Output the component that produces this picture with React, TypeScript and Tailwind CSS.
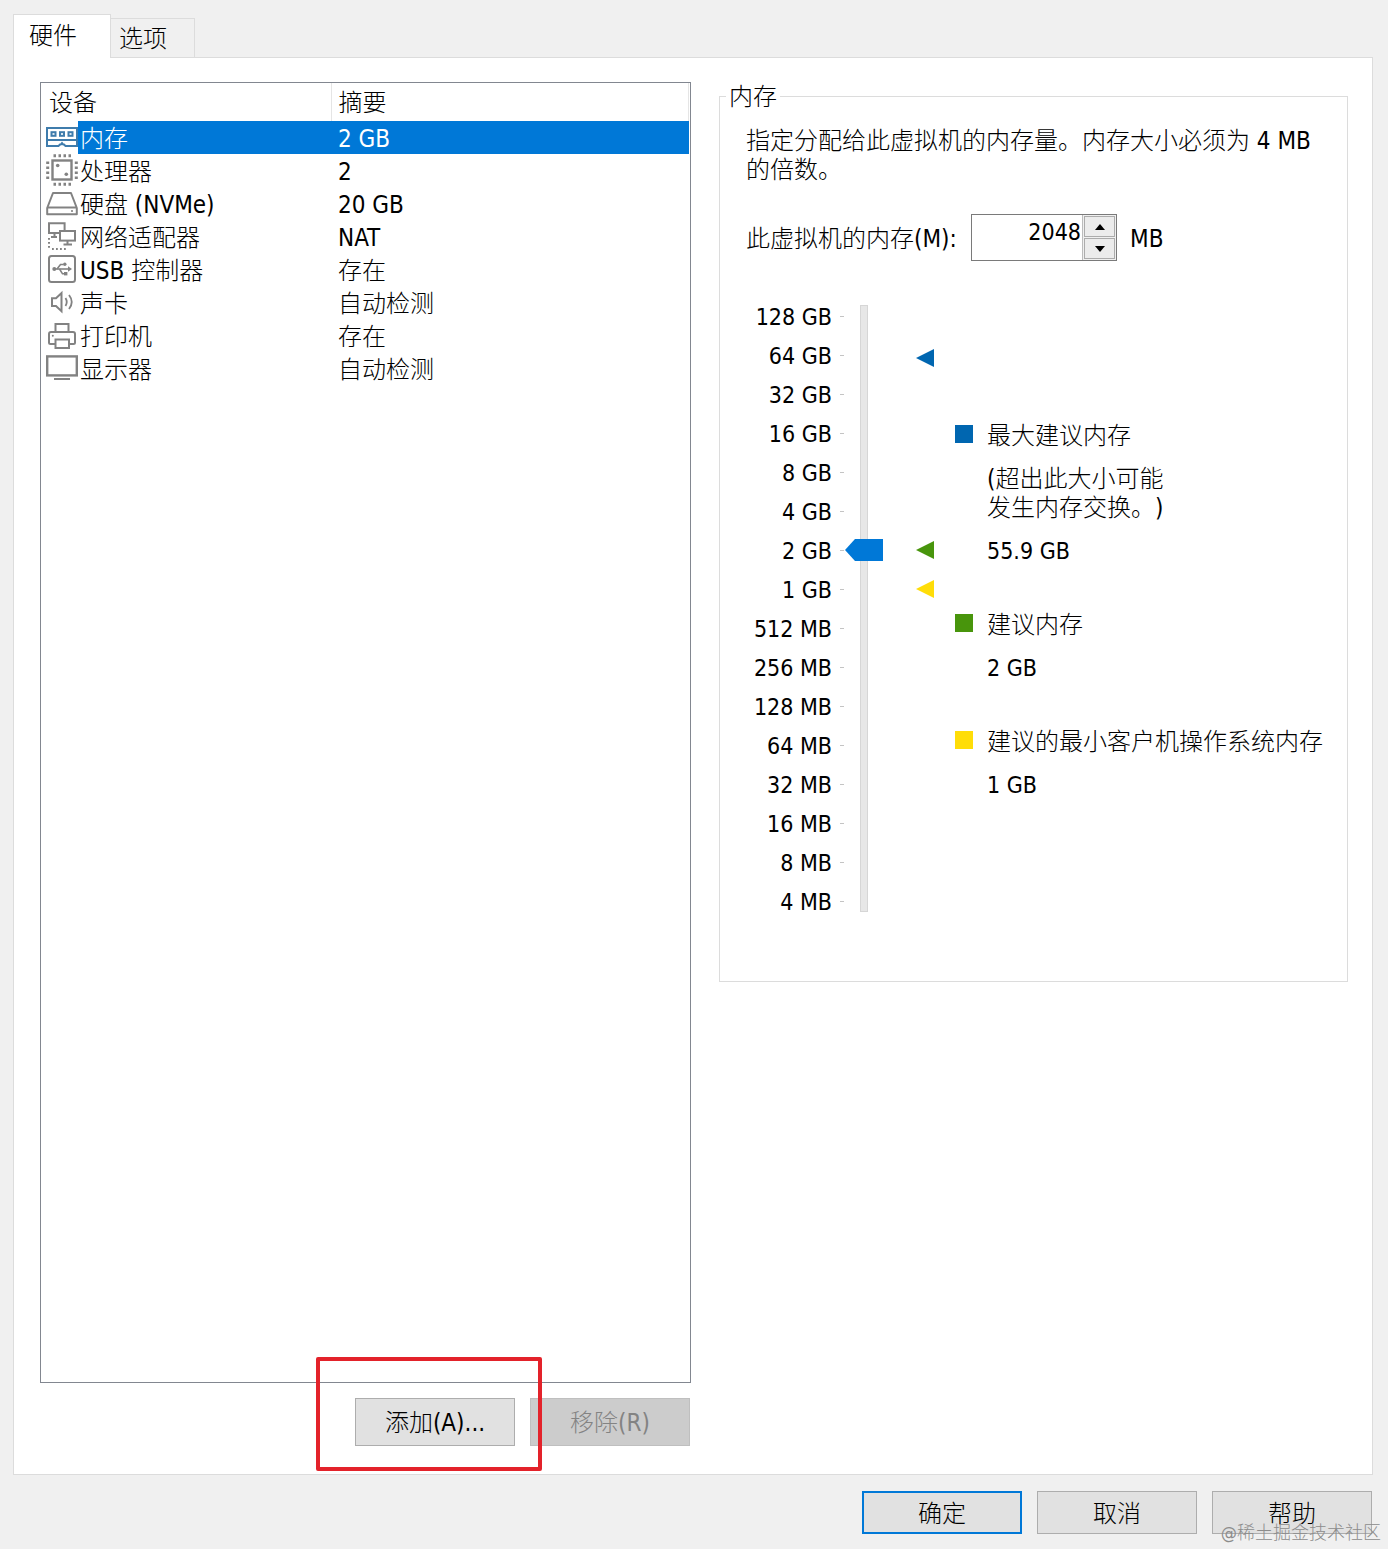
import { useState } from 'react';
import type { ReactNode } from 'react';

type Device = { name: string; summary: string; icon: ReactNode };

const devices: Device[] = [
  { name: '内存', summary: '2 GB', icon: <MemoryIcon /> },
  { name: '处理器', summary: '2', icon: <CpuIcon /> },
  { name: '硬盘 (NVMe)', summary: '20 GB', icon: <DiskIcon /> },
  { name: '网络适配器', summary: 'NAT', icon: <NetworkIcon /> },
  { name: 'USB 控制器', summary: '存在', icon: <UsbIcon /> },
  { name: '声卡', summary: '自动检测', icon: <SoundIcon /> },
  { name: '打印机', summary: '存在', icon: <PrinterIcon /> },
  { name: '显示器', summary: '自动检测', icon: <DisplayIcon /> },
];

const scale = [
  '128 GB', '64 GB', '32 GB', '16 GB', '8 GB', '4 GB', '2 GB', '1 GB',
  '512 MB', '256 MB', '128 MB', '64 MB', '32 MB', '16 MB', '8 MB', '4 MB',
];

const iconClass = 'block h-[33px] w-8 shrink-0';

function MemoryIcon() {
  return (
    <svg viewBox="0 0 32 33" className={iconClass} fill="none" stroke="#3f7cac" strokeWidth="2">
      <path d="M1 7H31V25H19.5L18 23.5H17.2L16 22L14.8 23.5H14L12.5 25H1Z" fill="#fff" />
      <path d="M1 19H31" />
      <rect x="5.5" y="11.2" width="4" height="3.6" />
      <rect x="14" y="11.2" width="4" height="3.6" />
      <rect x="22.5" y="11.2" width="4" height="3.6" />
    </svg>
  );
}

function CpuIcon() {
  return (
    <svg viewBox="0 0 32 33" className={iconClass} fill="none" stroke="#828282">
      <rect x="6.5" y="6.5" width="19" height="19" strokeWidth="2.4" />
      <g strokeWidth="3">
        <path d="M7.5 1.7H25M7.5 30.3H25" strokeDasharray="2.5 2.5" />
        <path d="M1.7 7.5V25M30.3 7.5V25" strokeDasharray="2.5 2.5" />
      </g>
      <g fill="#828282" stroke="none">
        <circle cx="11.7" cy="11.5" r="1.8" />
        <circle cx="20.3" cy="20.3" r="1.8" />
      </g>
    </svg>
  );
}

function DiskIcon() {
  return (
    <svg viewBox="0 0 32 33" className={iconClass} fill="none" stroke="#828282" strokeWidth="2">
      <path d="M1.2 21L7 6H25L30.8 21V27.2H1.2Z" strokeLinejoin="round" />
      <path d="M1 20.5H31" />
      <circle cx="26" cy="24" r="1.1" fill="#828282" stroke="none" />
    </svg>
  );
}

function NetworkIcon() {
  return (
    <svg viewBox="0 0 32 33" className={iconClass} fill="none" stroke="#828282" strokeWidth="2">
      <path d="M13 13H3V3.2H18.6V10" />
      <path d="M8.5 13V16.5M5 17H11" />
      <rect x="14" y="11" width="15" height="9.6" />
      <path d="M21.5 20V24M17.5 24.6H26" />
      <path d="M3 18V30" strokeDasharray="1.8 2.2" />
      <path d="M6 29H20" strokeDasharray="1.8 2.2" />
    </svg>
  );
}

function UsbIcon() {
  return (
    <svg viewBox="0 0 32 33" className={iconClass} fill="none" stroke="#828282" strokeWidth="2">
      <rect x="3" y="3" width="26" height="26" rx="2.5" />
      <g strokeWidth="1.6">
        <path d="M8 16H24" />
        <path d="M11 16L14.5 11.5H17.5M13.5 16L16.5 20.8H19" />
      </g>
      <g fill="#828282" stroke="none">
        <circle cx="8.3" cy="16" r="2" />
        <circle cx="18.8" cy="11.3" r="1.7" />
        <rect x="18" y="19" width="3.4" height="3.4" />
        <path d="M22 13.2L26 16L22 18.8Z" />
      </g>
    </svg>
  );
}

function SoundIcon() {
  return (
    <svg viewBox="0 0 32 33" className={iconClass} fill="none" stroke="#828282" strokeWidth="2">
      <path d="M6 12.3H10L15.5 7V25.2L10 20H6Z" />
      <path d="M19.5 12Q22 16 19.5 20M23 9Q28.5 16 23 23" strokeWidth="1.8" />
    </svg>
  );
}

function PrinterIcon() {
  return (
    <svg viewBox="0 0 32 33" className={iconClass} fill="none" stroke="#828282" strokeWidth="2">
      <path d="M9.5 13V5H22.5V13" />
      <path d="M9 25H4.5Q3 25 3 23.5V15Q3 13 5 13H27Q29 13 29 15V23.5Q29 25 27.5 25H23" />
      <rect x="9.5" y="20.5" width="13.5" height="8.5" />
      <circle cx="6.8" cy="16.8" r="1" fill="#828282" stroke="none" />
    </svg>
  );
}

function DisplayIcon() {
  return (
    <svg viewBox="0 0 32 33" className={iconClass} fill="none" stroke="#828282" strokeWidth="2.4">
      <rect x="1.2" y="4.4" width="29.6" height="19" />
      <path d="M8 27H24" strokeWidth="2" />
    </svg>
  );
}

function Marker({ className }: { className: string }) {
  return (
    <svg viewBox="0 0 18 18" className={`block h-[18px] w-[18px] ${className}`} fill="currentColor">
      <path d="M0 9L18 0V18Z" />
    </svg>
  );
}

function Hint({ color, title, children }: { color: string; title: string; children: ReactNode }) {
  return (
    <div className="flex gap-[14px]">
      <span className={`mt-[3px] h-[18px] w-[18px] shrink-0 ${color}`} />
      <div className="flex flex-col gap-[14px]">
        <p>{title}</p>
        {children}
      </div>
    </div>
  );
}

function DeviceTable() {
  const [selected, setSelected] = useState(0);

  return (
    <div className="flex-1 border border-[#828790] bg-white pr-px">
      <table className="w-full table-fixed border-collapse text-left">
        <thead>
          <tr className="h-[38px]">
            <th className="w-[290px] border-r border-[#e5e5e5] p-0 pt-[3px] pl-2 font-light">设备</th>
            <th className="border-r border-[#e5e5e5] p-0 pt-[3px] pl-[7px] font-light">摘要</th>
          </tr>
        </thead>
        <tbody>
          {devices.map((device, i) => {
            const active = i === selected;
            return (
              <tr key={device.name} className="h-[33px] leading-[30px]" onClick={() => setSelected(i)}>
                <td className="p-0 pl-[5px]">
                  <div className="flex">
                    {device.icon}
                    <span className={`flex-1 pt-[3px] pl-[2px] ${active ? 'bg-[#0078d7] text-white' : ''}`}>
                      {device.name}
                    </span>
                  </div>
                </td>
                <td className={`p-0 pt-[3px] pl-[7px] ${active ? 'bg-[#0078d7] text-white' : ''}`}>
                  {device.summary}
                </td>
              </tr>
            );
          })}
        </tbody>
      </table>
    </div>
  );
}

function MemoryPanel() {
  const [memory, setMemory] = useState(2048);
  const step = Math.round(Math.log2(memory)) - 2;
  const setStep = (value: number) => setMemory(2 ** (Math.min(15, Math.max(0, value)) + 2));

  return (
    <fieldset className="min-w-0 self-start border border-[#dcdcdc] pb-[60px] pl-[26px]">
      <legend className="-ml-5 px-[3px] pt-[2px] leading-[26px]">内存</legend>

      <p className="pt-[17px] pr-[26px]">指定分配给此虚拟机的内存量。内存大小必须为 4 MB 的倍数。</p>

      <div className="mt-[29px] flex h-[47px] items-center">
        <label htmlFor="memory" className="w-[225px] pt-[3px] whitespace-nowrap">此虚拟机的内存(M):</label>
        <div className="flex h-[47px] w-[146px] border border-[#7a7a7a]">
          <input
            id="memory"
            type="text"
            value={memory}
            onChange={(e) => setMemory(Number(e.target.value) || 4)}
            className="w-0 flex-1 pr-px pb-[10px] text-right text-[23px] outline-none"
          />
          <div className="flex w-[34px] flex-col gap-px border-l border-[#bcbcbc] bg-[#f0f0f0] p-px">
            <button
              aria-label="增加"
              onClick={() => setStep(step + 1)}
              className="flex flex-1 items-center justify-center border border-[#acacac] bg-[#ececec]"
            >
              <svg viewBox="0 0 10 6" className="h-[6px] w-[10px]"><path d="M0 6L5 0L10 6Z" /></svg>
            </button>
            <button
              aria-label="减少"
              onClick={() => setStep(step - 1)}
              className="flex flex-1 items-center justify-center border border-[#acacac] bg-[#ececec]"
            >
              <svg viewBox="0 0 10 6" className="h-[6px] w-[10px]"><path d="M0 0L5 6L10 0Z" /></svg>
            </button>
          </div>
        </div>
        <span className="pt-[3px] pl-[13px]">MB</span>
      </div>

      <div className="mt-9 flex">
        <ul className="w-[99px] text-[23px] leading-[39px]">
          {scale.map((label) => (
            <li key={label} className="flex h-[39px] items-center justify-end gap-2">
              <span className="pt-[2px] leading-[37px] whitespace-nowrap">{label}</span>
              <span className="mr-px h-px w-1 bg-[#c4c4c4]" />
            </li>
          ))}
        </ul>
        <div className="mt-2 grid h-[607px] w-[38px]">
          <span className="col-start-1 row-start-1 w-2 justify-self-center border border-[#d6d6d6] bg-[#e7e7e7]" />
          <input
            type="range"
            aria-label="内存大小"
            min={0}
            max={15}
            value={step}
            onChange={(e) => setStep(Number(e.target.value))}
            className="col-start-1 row-start-1 h-[607px] w-[38px] appearance-none bg-transparent [direction:rtl] [writing-mode:vertical-lr] [&::-webkit-slider-thumb]:h-[22px] [&::-webkit-slider-thumb]:w-[38px] [&::-webkit-slider-thumb]:appearance-none [&::-webkit-slider-thumb]:bg-[#0078d7] [&::-webkit-slider-thumb]:[clip-path:polygon(0_50%,10px_0,100%_0,100%_100%,10px_100%)]"
          />
        </div>
        <div className="ml-[33px] w-[18px] shrink-0">
          <Marker className="mt-[52px] text-[#0066b0]" />
          <Marker className="mt-[174px] text-[#48950c]" />
          <Marker className="mt-[21px] text-[#ffdd08]" />
        </div>
        <div className="mt-[125px] ml-[21px] flex flex-col gap-[45px]">
          <Hint color="bg-[#0066b0]" title="最大建议内存">
            <p className="w-[190px]">(超出此大小可能发生内存交换。)</p>
            <p className="text-[23px]">55.9 GB</p>
          </Hint>
          <Hint color="bg-[#48950c]" title="建议内存">
            <p className="text-[23px]">2 GB</p>
          </Hint>
          <Hint color="bg-[#ffdd08]" title="建议的最小客户机操作系统内存">
            <p className="text-[23px]">1 GB</p>
          </Hint>
        </div>
      </div>
    </fieldset>
  );
}

export default function App() {
  return (
    <div className="relative flex min-h-screen flex-col bg-[#f0f0f0] pt-[14px] pr-[15px] pb-[15px] pl-[13px] font-['DejaVu_Sans_Condensed','Noto_Sans_CJK_SC',sans-serif] text-[24px] leading-[29px] font-light text-black [text-spacing-trim:space-all]">
      <div role="tablist" className="-mb-px flex items-end">
        <button role="tab" aria-selected="true" className="z-10 h-11 w-[98px] border border-b-0 border-[#dcdcdc] bg-white pr-[18px] text-center">
          硬件
        </button>
        <button role="tab" aria-selected="false" className="h-10 w-[84px] border border-l-0 border-[#dcdcdc] pt-[3px] pr-[19px] text-center">
          选项
        </button>
      </div>

      <main className="grid flex-1 grid-cols-[651fr_629fr] gap-7 border border-[#dcdcdc] bg-white pt-6 pr-6 pb-7 pl-[26px]">
        <section className="flex flex-col">
          <DeviceTable />
          <div className="mt-[15px] flex justify-end gap-[15px] pr-px">
            <div className="relative">
              <button className="h-12 w-40 border border-[#adadad] bg-[#e1e1e1] pt-[3px]">添加(A)...</button>
              <span className="pointer-events-none absolute -top-[41px] -right-[27px] -bottom-[25px] -left-[39px] z-10 rounded-xs border-4 border-[#e3222a]" />
            </div>
            <button disabled className="h-12 w-40 border border-[#bfbfbf] bg-[#cccccc] pt-[3px] text-[#838383]">移除(R)</button>
          </div>
        </section>
        <MemoryPanel />
      </main>

      <footer className="mt-4 flex justify-end gap-[15px] pr-px">
        <button className="h-[43px] w-40 border-2 border-[#0078d7] bg-[#e1e1e1] pt-[3px]">确定</button>
        <button className="h-[43px] w-40 border border-[#adadad] bg-[#e1e1e1] pt-[3px]">取消</button>
        <button className="h-[43px] w-40 border border-[#adadad] bg-[#e1e1e1] pt-[3px]">帮助</button>
      </footer>

      <span className="absolute right-[7px] bottom-1 text-[18px] leading-6 text-[#8c8c8c]">@稀土掘金技术社区</span>
    </div>
  );
}
